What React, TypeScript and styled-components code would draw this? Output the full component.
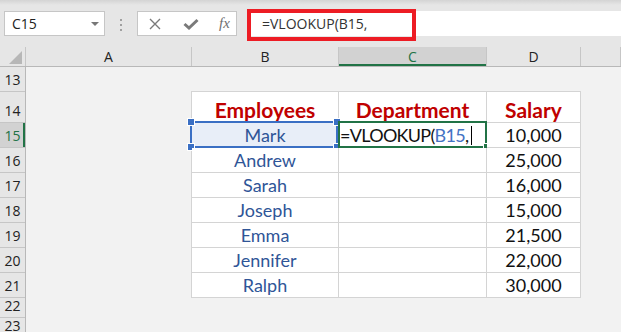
import styled, { createGlobalStyle } from "styled-components"

const GlobalStyle = createGlobalStyle`
  html, body {
    margin: 0;
    padding: 0;
  }
  body {
    background: #f2f2f2;
    font-family: "Open Sans", "Noto Sans", sans-serif;
  }
`

const Page = styled.div`
  width: 621px;
  height: 332px;
  overflow: hidden;
  display: flex;
  flex-direction: column;
  background: #f2f2f2;
`

const Toolbar = styled.div`
  height: 47px;
  flex-shrink: 0;
  box-sizing: border-box;
  display: flex;
  align-items: flex-start;
  padding: 11px 0 0 4px;
  background: linear-gradient(#d4d4d4 0, #e6e6e6 5px);
`

const NameBox = styled.div`
  width: 101px;
  height: 25px;
  box-sizing: border-box;
  background: #fff;
  border: 1px solid #c6c6c6;
  display: flex;
  align-items: center;
  justify-content: space-between;
  padding: 0 5px 0 7px;
  font-size: 14px;
  color: #222;
`

const Arrow = styled.span`
  width: 0;
  height: 0;
  border-left: 4px solid transparent;
  border-right: 4px solid transparent;
  border-top: 4px solid #777;
`

const Dots = styled.div`
  margin: 8px 0 0 15px;
  display: flex;
  flex-direction: column;
  gap: 3px;
  span {
    width: 2px;
    height: 2px;
    background: #a0a0a0;
  }
`

const IconBox = styled.div`
  margin-left: 15px;
  width: 100px;
  height: 25px;
  box-sizing: border-box;
  background: #fff;
  border: 1px solid #c6c6c6;
  display: flex;
  align-items: center;
  padding-left: 11px;
  gap: 22px;
  color: #7a7a7a;
`

const Fx = styled.span`
  font-family: "Liberation Serif", "DejaVu Serif", serif;
  font-style: italic;
  font-size: 15px;
  color: #6f6f6f;
  margin-left: -2px;
`

const FormulaInput = styled.div`
  position: relative;
  margin-left: 10px;
  flex: 1;
  height: 25px;
  background: #fff;
  display: flex;
  align-items: center;
  padding-left: 15px;
  font-size: 14px;
  color: #333;
`

const RedMark = styled.div`
  position: absolute;
  left: 0;
  top: -2px;
  width: 169px;
  height: 32px;
  box-sizing: border-box;
  border: 4px solid #ed1c24;
`

const ColumnHeaders = styled.div`
  height: 20px;
  flex-shrink: 0;
  box-sizing: border-box;
  display: flex;
  background: #e6e6e6;
  border-bottom: 1px solid #b8b8b8;
`

const Corner = styled.div`
  width: 26px;
  flex-shrink: 0;
  box-sizing: border-box;
  border-right: 1px solid #c6c6c6;
  display: flex;
  align-items: flex-end;
  justify-content: flex-end;
  padding: 0 3px 2px 0;
  span {
    width: 0;
    height: 0;
    border-left: 13px solid transparent;
    border-bottom: 13px solid #b7b7b7;
  }
`

const ColHead = styled.div<{ $w?: number; $active?: boolean }>`
  ${(p) => (p.$w ? `width: ${p.$w}px; flex-shrink: 0;` : "flex: 1;")}
  box-sizing: border-box;
  border-right: 1px solid #c6c6c6;
  display: flex;
  align-items: center;
  justify-content: center;
  font-size: 14px;
  color: ${(p) => (p.$active ? "#217346" : "#222")};
  background: ${(p) => (p.$active ? "#d2d2d2" : "transparent")};
  box-shadow: ${(p) => (p.$active ? "inset 0 -2px 0 #217346" : "none")};
`

const Body = styled.div`
  flex: 1;
  display: flex;
  min-height: 0;
`

const RowHeaders = styled.div`
  width: 26px;
  flex-shrink: 0;
  box-sizing: border-box;
  border-right: 1px solid #b8b8b8;
  background: #e6e6e6;
  display: flex;
  flex-direction: column;
`

const RowHead = styled.div<{ $h: number; $active?: boolean }>`
  height: ${(p) => p.$h}px;
  flex-shrink: 0;
  box-sizing: border-box;
  border-bottom: 1px solid #c6c6c6;
  display: flex;
  align-items: flex-end;
  justify-content: center;
  padding-bottom: 2px;
  font-size: 14px;
  line-height: 18px;
  color: ${(p) => (p.$active ? "#217346" : "#222")};
  background: ${(p) => (p.$active ? "#d2d2d2" : "transparent")};
  box-shadow: ${(p) => (p.$active ? "inset -2px 0 0 #217346" : "none")};
`

const Sheet = styled.div`
  flex: 1;
  padding: 24px 0 0 165px;
`

const Table = styled.div`
  display: grid;
  grid-template-columns: 147px 148px 94px;
  width: max-content;
  border-top: 1px solid #d4d4d4;
  border-left: 1px solid #d4d4d4;
  background: #fff;
`

const Cell = styled.div<{ $h: number; $head?: boolean; $tone?: "name" | "num"; $left?: boolean; $picked?: boolean }>`
  position: relative;
  height: ${(p) => p.$h}px;
  box-sizing: border-box;
  border-right: 1px solid #d4d4d4;
  border-bottom: 1px solid #d4d4d4;
  display: flex;
  align-items: flex-end;
  justify-content: ${(p) => (p.$left ? "flex-start" : "center")};
  padding: 0 0 1px ${(p) => (p.$left ? "1px" : "0")};
  font-family: Lato, "Open Sans", sans-serif;
  font-size: ${(p) => (p.$head ? "21px" : "18px")};
  font-weight: ${(p) => (p.$head ? 700 : 400)};
  letter-spacing: ${(p) => (p.$left ? "-0.7px" : "normal")};
  line-height: 22px;
  white-space: nowrap;
  color: ${(p) => (p.$head ? "#c00000" : p.$tone === "name" ? "#2f5597" : "#111")};
  background: ${(p) => (p.$picked ? "#e8eef8" : "#fff")};
`

const RefFrame = styled.span`
  position: absolute;
  left: -2px;
  top: -2px;
  width: 148px;
  height: 27px;
  box-sizing: border-box;
  border: 2px solid #3a6fc4;
  pointer-events: none;
`

const Handle = styled.span<{ $x: "left" | "right"; $y: "top" | "bottom" }>`
  position: absolute;
  ${(p) => p.$x}: -4px;
  ${(p) => p.$y}: -4px;
  width: 6px;
  height: 6px;
  box-sizing: border-box;
  background: #3a6fc4;
  outline: 1px solid #fff;
`

const EditFrame = styled.span`
  position: absolute;
  left: -1px;
  top: -2px;
  width: 149px;
  height: 27px;
  box-sizing: border-box;
  border: 2px solid #217346;
  pointer-events: none;
`

const FillHandle = styled.span`
  position: absolute;
  right: -4px;
  bottom: -3px;
  width: 5px;
  height: 5px;
  background: #217346;
  outline: 1px solid #fff;
`

const Ref = styled.span`
  color: #4472c4;
`

const Caret = styled.span`
  display: inline-block;
  width: 1px;
  height: 19px;
  background: #000;
  margin: 0 0 1px 3px;
  align-self: flex-end;
`

const rows = [
  { name: "Mark", salary: "10,000" },
  { name: "Andrew", salary: "25,000" },
  { name: "Sarah", salary: "16,000" },
  { name: "Joseph", salary: "15,000" },
  { name: "Emma", salary: "21,500" },
  { name: "Jennifer", salary: "22,000" },
  { name: "Ralph", salary: "30,000" },
]

const rowHeights = [
  { n: 13, h: 25 },
  { n: 14, h: 31 },
  { n: 15, h: 25 },
  { n: 16, h: 25 },
  { n: 17, h: 25 },
  { n: 18, h: 25 },
  { n: 19, h: 25 },
  { n: 20, h: 25 },
  { n: 21, h: 25 },
  { n: 22, h: 20 },
  { n: 23, h: 20 },
]

export default function App() {
  return (
    <Page>
      <GlobalStyle />
      <Toolbar>
        <NameBox>
          C15
          <Arrow />
        </NameBox>
        <Dots>
          <span />
          <span />
          <span />
        </Dots>
        <IconBox>
          <svg width="12" height="12" viewBox="0 0 12 12">
            <path d="M1 1 L11 11 M11 1 L1 11" stroke="#7a7a7a" strokeWidth="1.4" fill="none" />
          </svg>
          <svg width="16" height="12" viewBox="0 0 16 12">
            <path d="M1.5 6 L6 10 L14.5 2" stroke="#7a7a7a" strokeWidth="3" fill="none" />
          </svg>
          <Fx>fx</Fx>
        </IconBox>
        <FormulaInput>
          =VLOOKUP(B15,
          <RedMark />
        </FormulaInput>
      </Toolbar>

      <ColumnHeaders>
        <Corner>
          <span />
        </Corner>
        <ColHead $w={166}>A</ColHead>
        <ColHead $w={147}>B</ColHead>
        <ColHead $w={148} $active>C</ColHead>
        <ColHead $w={94}>D</ColHead>
        <ColHead />
      </ColumnHeaders>

      <Body>
        <RowHeaders>
          {rowHeights.map((r) => (
            <RowHead key={r.n} $h={r.h} $active={r.n === 15}>
              {r.n}
            </RowHead>
          ))}
        </RowHeaders>
        <Sheet>
          <Table>
            <Cell $h={31} $head>Employees</Cell>
            <Cell $h={31} $head>Department</Cell>
            <Cell $h={31} $head>Salary</Cell>
            {rows.map((r, i) => (
              <>
                <Cell key={r.name} $h={25} $tone="name" $picked={i === 0}>
                  {r.name}
                  {i === 0 && (
                    <RefFrame>
                      <Handle $x="left" $y="top" />
                      <Handle $x="left" $y="bottom" />
                      <Handle $x="right" $y="top" />
                      <Handle $x="right" $y="bottom" />
                    </RefFrame>
                  )}
                </Cell>
                <Cell key={r.name + "-d"} $h={25} $left={i === 0}>
                  {i === 0 && (
                    <>
                      =VLOOKUP(<Ref>B15</Ref>,
                      <Caret />
                      <EditFrame>
                        <FillHandle />
                      </EditFrame>
                    </>
                  )}
                </Cell>
                <Cell key={r.name + "-s"} $h={25} $tone="num">
                  {r.salary}
                </Cell>
              </>
            ))}
          </Table>
        </Sheet>
      </Body>
    </Page>
  )
}
